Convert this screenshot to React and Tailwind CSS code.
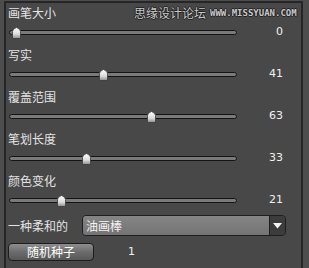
import React from "react";

const sliders = [
  { label: "画笔大小", value: 0 },
  { label: "写实", value: 41 },
  { label: "覆盖范围", value: 63 },
  { label: "笔划长度", value: 33 },
  { label: "颜色变化", value: 21 },
];

const Thumb = ({ value }) => (
  <svg
    className="absolute top-[-4px]"
    style={{ left: `${1.5 + value * 2.146}px` }}
    width="9"
    height="12"
    viewBox="0 0 9 12"
  >
    <defs>
      <linearGradient id="thumbGrad" x1="0" y1="0" x2="0" y2="1">
        <stop offset="0" stopColor="#ffffff" />
        <stop offset="0.6" stopColor="#dcdcdc" />
        <stop offset="1" stopColor="#8c8c8c" />
      </linearGradient>
    </defs>
    <path d="M0.5 11.5 L0.5 4.5 Q0.5 2 4.5 0.5 Q8.5 2 8.5 4.5 L8.5 11.5 Z" fill="url(#thumbGrad)" stroke="#3a3a3a" strokeWidth="0.8" />
  </svg>
);

const SliderRow = ({ label, value }) => (
  <div className="flex flex-col mb-[4px]">
    <div className="h-[16px] leading-[16px] text-[12px] text-[#e4e4e4]">{label}</div>
    <div className="h-[22px] flex items-center">
      <div className="relative w-[228px] h-[5px] ml-[1px] rounded-full border border-[#141414] bg-[#7a7a7a]">
        <Thumb value={value} />
      </div>
      <div className="w-[46px] text-right text-[11px] text-[#f0f0f0] font-['DejaVu_Sans',sans-serif]">{value}</div>
    </div>
  </div>
);

export default function App() {
  return (
    <div className="w-[309px] h-[268px] bg-[#4d4d4d] pt-[1px] overflow-hidden font-['Noto_Sans_CJK_SC',sans-serif]">
      <div className="relative ml-[4px] w-[299px] h-[267px] bg-[#484848] border-l-2 border-t-2 border-r-2 border-[#262626] pt-[2px] pl-[2px]">
        {/* watermark */}
        <div className="absolute top-[3px] left-[128px] flex items-center gap-[4px] text-[#c8c8c8] [text-shadow:1px_0_0_#222,-1px_0_0_#222,0_1px_0_#222,0_-1px_0_#222]">
          <span className="text-[12px] leading-[14px]">思缘设计论坛</span>
          <span className="text-[9px] leading-[14px] font-bold font-['DejaVu_Sans_Mono',monospace]">WWW.MISSYUAN.COM</span>
        </div>

        {sliders.map((s) => (
          <SliderRow key={s.label} label={s.label} value={s.value} />
        ))}

        <div className="flex items-center mt-[3px] h-[21px]">
          <div className="w-[74px] text-[12px] text-[#e4e4e4]">一种柔和的</div>
          <div className="flex w-[204px] h-[21px] rounded-[4px] border border-[#1e1e1e] overflow-hidden">
            <div className="flex-1 bg-gradient-to-b from-[#858585] to-[#747474] text-[12px] leading-[19px] pl-[3px] text-[#f2f2f2]">油画棒</div>
            <div className="w-[16px] bg-[#3c3c3c] border-l border-[#1e1e1e] flex items-center justify-center">
              <svg width="9" height="6" viewBox="0 0 9 6">
                <path d="M0 0 L9 0 L4.5 5.5 Z" fill="#f4f4f4" />
              </svg>
            </div>
          </div>
        </div>

        <div className="flex items-center mt-[7px]">
          <button className="w-[86px] h-[18px] rounded-[4px] border border-[#1c1c1c] bg-gradient-to-b from-[#8e8e8e] via-[#6c6c6c] to-[#575757] text-[12px] leading-[16px] text-white">
            随机种子
          </button>
          <span className="ml-[34px] text-[11px] text-[#f0f0f0] font-['DejaVu_Sans',sans-serif]">1</span>
        </div>
      </div>
    </div>
  );
}
